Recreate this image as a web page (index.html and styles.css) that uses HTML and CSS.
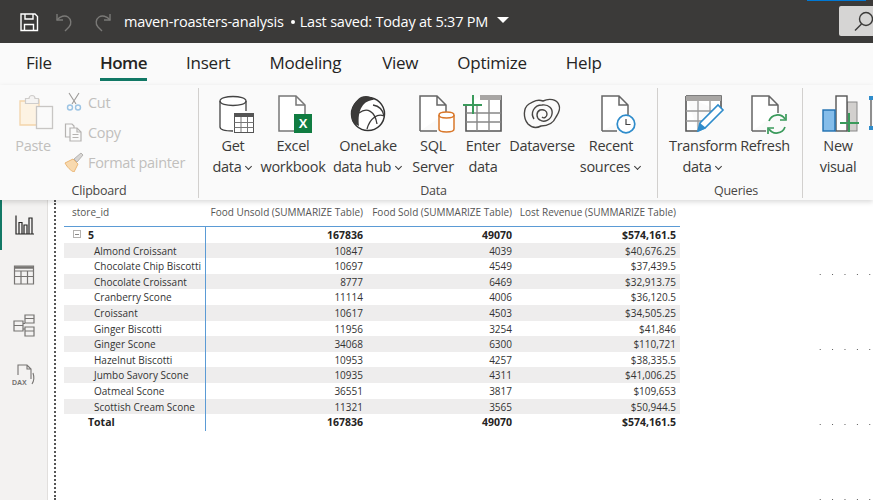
FILE: index.html
```html
<!DOCTYPE html>
<html lang="en">

<head>
    <meta charset="UTF-8">
    <meta name="viewport" content="width=device-width, initial-scale=1.0">
    <title>maven-roasters-analysis</title>
    <link rel="stylesheet" href="styles.css">
</head>

<body>

    <header class="titlebar">
        <svg class="qa" width="22" height="22" viewBox="0 0 22 22" fill="none" stroke="#fff" stroke-width="1.4">
            <path d="M3 3h14l2.500 2.500V19.500H3z" /><path d="M7 3v5h8V3" /><path d="M6.500 19.500v-6h9v6" />
        </svg>
        <svg class="qa undo" width="20" height="22" viewBox="0 0 20 22" fill="none" stroke="#7a7977" stroke-width="1.4">
            <path d="M2 3v6h6" /><path d="M2 9c3-4 8-5 11-3s4 7 1 10l-4 4" />
        </svg>
        <svg class="qa redo" width="20" height="22" viewBox="0 0 20 22" fill="none" stroke="#7a7977" stroke-width="1.4">
            <path d="M18 3v6h-6" /><path d="M18 9c-3-4-8-5-11-3s-4 7-1 10l4 4" />
        </svg>
        <span class="filename">maven-roasters-analysis</span>
        <span class="dot"></span>
        <span class="saved">Last saved: Today at 5:37 PM</span>
        <span class="caret"></span>
        <div class="search">
            <svg width="20" height="22" viewBox="0 0 20 22" fill="none" stroke="#3b3a39" stroke-width="1.4">
                <circle cx="12" cy="9" r="6.500" /><path d="M7.500 14L1 20.500" />
            </svg>
        </div>
        <span class="account-line"></span>
    </header>

    <nav class="tabs">
        <a class="tab tab-file">File</a>
        <a class="tab tab-home active">Home</a>
        <a class="tab tab-insert">Insert</a>
        <a class="tab tab-modeling">Modeling</a>
        <a class="tab tab-view">View</a>
        <a class="tab tab-optimize">Optimize</a>
        <a class="tab tab-help">Help</a>
    </nav>

    <section class="ribbon">
        <div class="group group-clipboard">
            <div class="group-body">
                <div class="btn btn-paste disabled">
                    <svg width="44" height="40" viewBox="0 0 44 40" fill="none">
                        <path d="M20 8h4.500v-1h0.500V32H6V8h6" fill="#fdf3e3" stroke="#f3d5ab" stroke-width="1.300" />
                        <path d="M11.500 5.500h3.500a3 3 0 0 1 6 0h3.500v5h-13z" fill="#f5f4f3" stroke="#cfcdcb" stroke-width="1.200" />
                        <rect x="22.500" y="17.500" width="16" height="22" fill="#fafafa" stroke="#c8c6c4" stroke-width="1.300" transform="translate(0 -4)" />
                    </svg>
                    <span>Paste</span>
                </div>
                <div class="small-col disabled">
                    <div class="small-btn">
                        <svg width="20" height="20" viewBox="0 0 20 20" fill="none" stroke="#9c9a98" stroke-width="1.100">
                            <path d="M5 1l7 11M15 1L8 12" /><circle cx="6" cy="15.500" r="2.500" stroke="#9cc4e4" stroke-width="1.400" /><circle cx="14" cy="15.500" r="2.500" stroke="#9cc4e4" stroke-width="1.400" />
                        </svg>
                        <span>Cut</span>
                    </div>
                    <div class="small-btn">
                        <svg width="20" height="20" viewBox="0 0 20 20" fill="none" stroke="#b5b3b1" stroke-width="1.200">
                            <path d="M6 15H1.500V2H8l2 2v2" /><path d="M6 6h7l4 4v9H6z" /><path d="M13 6v4h4M8.500 12.500h6M8.500 15.500h6" />
                        </svg>
                        <span>Copy</span>
                    </div>
                    <div class="small-btn">
                        <svg width="20" height="20" viewBox="0 0 20 20" fill="none">
                            <path d="M1 11l8-4 5 5-4 8c-3-1-7-5-9-9z" fill="#f8d9ae" stroke="#eab676" />
                            <path d="M10 7l7-6 2 2-6 7z" fill="#d8d6d4" stroke="#b5b3b1" />
                        </svg>
                        <span>Format painter</span>
                    </div>
                </div>
            </div>
            <div class="group-label">Clipboard</div>
        </div>

        <div class="group group-data">
            <div class="group-body">
                <div class="btn">
                    <svg width="44" height="40" viewBox="0 0 44 40" fill="none">
                        <path d="M35 17V7c0-6-26-6-26 0v26c0 3 7 4 13 4" fill="#fff" stroke="#444" stroke-width="1.300" />
                        <path d="M9 7c0 6 26 6 26 0" stroke="#444" stroke-width="1.300" />
                        <rect x="23.500" y="19.500" width="19" height="19" fill="#fff" stroke="#555" />
                        <rect x="23" y="19" width="20" height="4" fill="#555" />
                        <path d="M23.500 28.500h19M23.500 33.500h19M30 23v15M36.500 23v15" stroke="#777" />
                    </svg>
                    <span>Get</span>
                    <span>data<i class="chev"></i></span>
                </div>
                <div class="btn">
                    <svg width="44" height="40" viewBox="0 0 44 40" fill="none">
                        <path d="M8 2h17l9 9v26H8z" fill="#fff" stroke="#777" stroke-width="1.500" />
                        <path d="M25 2v9h9" stroke="#777" stroke-width="1.500" />
                        <rect x="23" y="20" width="18" height="19" fill="#107c41" />
                        <text x="32" y="34" class="xl">X</text>
                    </svg>
                    <span>Excel</span>
                    <span>workbook</span>
                </div>
                <div class="btn">
                    <svg width="44" height="40" viewBox="0 0 44 40" fill="none">
                        <circle cx="22" cy="20" r="16.500" fill="#fff" stroke="#333" stroke-width="1.500" />
                        <path d="M6 26C3 14 10 6 15 3c5-2 10-1 13 3-10 0-17 9-15 26-3-1-6-3-7-6z" fill="#3b3a39" />
                        <path d="M13 19c8-6 16-2 18 11M27 11c6 1 10 5 11 11-6-3-14 2-17 13" stroke="#3b3a39" stroke-width="1.300" />
                    </svg>
                    <span>OneLake</span>
                    <span>data hub<i class="chev"></i></span>
                </div>
                <div class="btn">
                    <svg width="44" height="40" viewBox="0 0 44 40" fill="none">
                        <path d="M9 37V2h17l9 9v8M26 2v9h9M9 37h17" fill="#fff" stroke="#666" stroke-width="1.500" />
                        <path d="M43 21v14c0 4-15 4-15 0V21" fill="#fff" stroke="#d9782b" stroke-width="1.500" />
                        <path d="M28 21c0-4 15-4 15 0s-15 4-15 0z" fill="#fff" stroke="#d9782b" stroke-width="1.500" />
                    </svg>
                    <span>SQL</span>
                    <span>Server</span>
                </div>
                <div class="btn">
                    <svg width="44" height="40" viewBox="0 0 44 40" fill="none">
                        <path d="M5 10v27h35V2H20" fill="#fff" stroke="#555" stroke-width="1.600" />
                        <rect x="19" y="1" width="21" height="5" fill="#a8a6a4" />
                        <path d="M5 19h35M5 28h35M16 12v25M28 6v31" stroke="#888" stroke-width="1.400" />
                        <path d="M12 1v19M2 11h19" stroke="#3a9a5b" stroke-width="2" />
                    </svg>
                    <span>Enter</span>
                    <span>data</span>
                </div>
                <div class="btn">
                    <svg width="44" height="40" viewBox="0 0 44 40" fill="none" stroke="#484644" stroke-width="1.400">
                        <path d="M8 30C3 24 3 14 9 10c5-3 9-5 14-3 6-3 14-2 16 4 2 5-1 9-3 12-3 7-10 9-15 9-4 2-9 2-13-2z" />
                        <path d="M14 25c-4-6 0-14 8-14 7-1 11 4 10 9-1 6-8 9-12 6-4-2-4-8 0-10 4-1 7 1 7 4s-3 5-5 3" />
                    </svg>
                    <span>Dataverse</span>
                </div>
                <div class="btn btn-recent">
                    <svg width="44" height="40" viewBox="0 0 44 40" fill="none">
                        <path d="M9 37V2h17l9 9v12M26 2v9h9M9 37h15" fill="#fff" stroke="#666" stroke-width="1.500" />
                        <circle cx="33" cy="30" r="8.800" fill="#fff" stroke="#2f8ccb" stroke-width="1.700" />
                        <path d="M33 25v5.500h4.500" stroke="#444" stroke-width="1.200" />
                    </svg>
                    <span>Recent</span>
                    <span>sources<i class="chev"></i></span>
                </div>
            </div>
            <div class="group-label">Data</div>
        </div>

        <div class="group group-queries">
            <div class="group-body">
                <div class="btn btn-transform">
                    <svg width="44" height="40" viewBox="0 0 44 40" fill="none">
                        <path d="M5 2h35v16M5 2v35h12" fill="#fff" stroke="#555" stroke-width="1.600" />
                        <rect x="5" y="2" width="35" height="5" fill="#a8a6a4" />
                        <path d="M5 17h30M5 27h18M17 7v30M29 7v14" stroke="#999" stroke-width="1.300" />
                        <path d="M17 37l2-8 18-18 5 5-18 18z" fill="#fff" stroke="#2f8ccb" stroke-width="1.600" />
                        <path d="M17 38l2-9 6 5z" fill="#2f8ccb" />
                    </svg>
                    <span>Transform</span>
                    <span>data<i class="chev"></i></span>
                </div>
                <div class="btn">
                    <svg width="44" height="40" viewBox="0 0 44 40" fill="none">
                        <path d="M9 37V2h17l9 9v8M26 2v9h9M9 37h14" fill="#fff" stroke="#666" stroke-width="1.500" />
                        <path d="M26 27a9 9 0 0 1 16-2M42 33a9 9 0 0 1-16 2" stroke="#3a9a5b" stroke-width="1.700" />
                        <path d="M43 20v6h-6M25 40v-6h6" stroke="#3a9a5b" stroke-width="1.700" />
                    </svg>
                    <span>Refresh</span>
                </div>
            </div>
            <div class="group-label">Queries</div>
        </div>

        <div class="group group-insert">
            <div class="group-body">
                <div class="btn">
                    <svg width="44" height="40" viewBox="0 0 44 40" fill="none">
                        <rect x="31" y="8" width="10" height="29" fill="#d2d0ce" stroke="#888" />
                        <rect x="20" y="2" width="11" height="35" fill="#fff" stroke="#555" stroke-width="1.400" />
                        <rect x="7" y="16" width="12" height="21" fill="#85bdea" stroke="#1f6fb0" stroke-width="1.400" />
                        <path d="M33 19v19M24 29h19" stroke="#3a9a5b" stroke-width="2" />
                    </svg>
                    <span>New</span>
                    <span>visual</span>
                </div>
            </div>
        </div>
        <svg class="clipped" width="10" height="40" viewBox="0 0 10 40" fill="none">
            <path d="M2 4v30" stroke="#555" stroke-width="1.300" /><rect x="0" y="2" width="4" height="4" fill="#2f8ccb" /><rect x="0" y="32" width="4" height="4" fill="#2f8ccb" />
        </svg>
    </section>

    <main class="workspace">
        <aside class="rail">
            <div class="rail-item active">
                <svg width="22" height="22" viewBox="0 0 22 22" fill="none" stroke="#252423" stroke-width="1.200">
                    <path d="M2 1.500v18.500h18M5 20V8.500h3V20M10 20V11h3v9M15 20V4h3v16" />
                </svg>
            </div>
            <div class="rail-item">
                <svg width="22" height="22" viewBox="0 0 22 22" fill="none" stroke="#767472" stroke-width="1.200">
                    <path d="M1.500 2h19v18h-19zM1.500 7h19M1.500 12.500h19M8 7v13M14.500 7v13" /><path d="M1.500 3.500h19" stroke-width="2.500" />
                </svg>
            </div>
            <div class="rail-item">
                <svg width="24" height="24" viewBox="0 0 24 24" fill="none" stroke="#767472" stroke-width="1.200">
                    <path d="M2 8h9v10H2zM2 12.500h9M13 2h9v8h-9zM13 5.500h9M13 14h9v9h-9zM13 18h9M11 10.500h2M11 16h2" />
                </svg>
            </div>
            <div class="rail-item">
                <svg width="24" height="24" viewBox="0 0 24 24" fill="none" stroke="#767472" stroke-width="1.100">
                    <path d="M6 12V2h9l4 4v10M15 2v4h4M21 10c1 3 1 8-1 11" />
                    <text x="0" y="22" class="dax">DAX</text>
                </svg>
            </div>
        </aside>

        <div class="canvas">
            <div class="matrix">
                <div class="row head">
                    <div class="cell first">store_id</div>
                    <div class="cell">Food Unsold (SUMMARIZE Table)</div>
                    <div class="cell">Food Sold (SUMMARIZE Table)</div>
                    <div class="cell">Lost Revenue (SUMMARIZE Table)</div>
                </div>
                <div class="row bold">
                    <div class="cell first store"><i class="minus"></i>5</div>
                    <div class="cell">167836</div><div class="cell">49070</div><div class="cell">$574,161.5</div>
                </div>
                <div class="row band">
                    <div class="cell first item">Almond Croissant</div>
                    <div class="cell">10847</div><div class="cell">4039</div><div class="cell">$40,676.25</div>
                </div>
                <div class="row">
                    <div class="cell first item">Chocolate Chip Biscotti</div>
                    <div class="cell">10697</div><div class="cell">4549</div><div class="cell">$37,439.5</div>
                </div>
                <div class="row band">
                    <div class="cell first item">Chocolate Croissant</div>
                    <div class="cell">8777</div><div class="cell">6469</div><div class="cell">$32,913.75</div>
                </div>
                <div class="row">
                    <div class="cell first item">Cranberry Scone</div>
                    <div class="cell">11114</div><div class="cell">4006</div><div class="cell">$36,120.5</div>
                </div>
                <div class="row band">
                    <div class="cell first item">Croissant</div>
                    <div class="cell">10617</div><div class="cell">4503</div><div class="cell">$34,505.25</div>
                </div>
                <div class="row">
                    <div class="cell first item">Ginger Biscotti</div>
                    <div class="cell">11956</div><div class="cell">3254</div><div class="cell">$41,846</div>
                </div>
                <div class="row band">
                    <div class="cell first item">Ginger Scone</div>
                    <div class="cell">34068</div><div class="cell">6300</div><div class="cell">$110,721</div>
                </div>
                <div class="row">
                    <div class="cell first item">Hazelnut Biscotti</div>
                    <div class="cell">10953</div><div class="cell">4257</div><div class="cell">$38,335.5</div>
                </div>
                <div class="row band">
                    <div class="cell first item">Jumbo Savory Scone</div>
                    <div class="cell">10935</div><div class="cell">4311</div><div class="cell">$41,006.25</div>
                </div>
                <div class="row">
                    <div class="cell first item">Oatmeal Scone</div>
                    <div class="cell">36551</div><div class="cell">3817</div><div class="cell">$109,653</div>
                </div>
                <div class="row band">
                    <div class="cell first item">Scottish Cream Scone</div>
                    <div class="cell">11321</div><div class="cell">3565</div><div class="cell">$50,944.5</div>
                </div>
                <div class="row bold">
                    <div class="cell first store">Total</div>
                    <div class="cell">167836</div><div class="cell">49070</div><div class="cell">$574,161.5</div>
                </div>
            </div>
            <div class="grid-dots"></div>
        </div>
    </main>

</body>

</html>
```

FILE: styles.css
```css
* {
    box-sizing: border-box;
}

body {
    margin: 0;
    height: 500px;
    overflow: hidden;
    font-family: "Open Sans", "Noto Sans", sans-serif;
    background-color: #fff;
    color: #252423;
}

/* title bar */
.titlebar {
    display: flex;
    align-items: center;
    position: relative;
    height: 43px;
    padding-left: 18px;
    background-color: #3b3a39;
    color: #fff;
    font-size: 14.5px;
    letter-spacing: -0.2px;
}

.undo {
    margin-left: 15px;
}

.redo {
    margin-left: 17px;
}

.filename {
    margin-left: 12px;
}

.dot {
    width: 4px;
    height: 4px;
    margin: 0 5px 0 7px;
    border-radius: 50%;
    background-color: #fff;
}

.caret {
    width: 0;
    height: 0;
    margin-left: 9px;
    margin-bottom: 4px;
    border-left: 6px solid transparent;
    border-right: 6px solid transparent;
    border-top: 6px solid #fff;
}

.search {
    position: absolute;
    left: 839px;
    top: 6px;
    width: 40px;
    height: 30px;
    padding: 4px 0 0 15px;
    border-radius: 2px;
    background-color: #d6d5d4;
}

.account-line {
    position: absolute;
    left: 807px;
    top: 0;
    width: 59px;
    height: 1px;
    background-color: #0078d4;
}

/* tabs */
.tabs {
    display: flex;
    height: 42px;
    padding-left: 26px;
    background-color: #fafafa;
    font-size: 17px;
    letter-spacing: -0.25px;
}

.tab {
    height: 38px;
    padding-top: 8px;
    color: #252423;
}

.tab-home {
    margin-left: 48px;
    font-weight: 600;
    border-bottom: 3px solid #117865;
    height: 38px;
    letter-spacing: -0.5px;
}

.tab-insert {
    margin-left: 39px;
}

.tab-modeling {
    margin-left: 39px;
}

.tab-view {
    margin-left: 41px;
}

.tab-optimize {
    margin-left: 39px;
}

.tab-help {
    margin-left: 39px;
}

/* ribbon */
.ribbon {
    display: flex;
    position: relative;
    z-index: 2;
    height: 115px;
    background-color: #fafafa;
    box-shadow: 0 2px 5px rgba(0, 0, 0, 0.15);
    font-size: 14.5px;
    letter-spacing: -0.3px;
    color: #3b3a39;
}

.group {
    display: flex;
    flex-direction: column;
    flex-shrink: 0;
    height: 110px;
    margin-top: 3px;
    border-right: 1px solid #d2d0ce;
}

.group-body {
    display: flex;
    flex-shrink: 0;
    height: 96px;
}

.group-label {
    line-height: 14px;
    text-align: center;
    font-size: 12.5px;
    letter-spacing: -0.2px;
    color: #484644;
}

.group-clipboard {
    width: 199px;
}

.group-data {
    width: 459px;
    padding-left: 11px;
}

.group-queries {
    width: 145px;
    padding-left: 12px;
}

.group-insert {
    width: 66px;
    border-right: 0;
    padding-left: 12px;
}

.btn {
    display: flex;
    flex-direction: column;
    align-items: center;
    width: 46px;
    line-height: 21px;
    white-space: nowrap;
}

.btn svg {
    flex-shrink: 0;
    height: 40px;
    margin-top: 6px;
    margin-bottom: 1px;
}

.group-data .btn:nth-child(2) {
    width: 74px;
}

.group-data .btn:nth-child(3) {
    width: 76px;
}

.group-data .btn:nth-child(4) {
    width: 54px;
}

.group-data .btn:nth-child(6) {
    width: 72px;
}

.group-data .btn:nth-child(7) {
    width: 66px;
}

.btn-recent svg {
    margin-left: 8px;
}

.btn-transform {
    width: 66px;
}

.group-queries .btn:nth-child(2) {
    width: 58px;
}

.btn-paste {
    width: 44px;
    margin-left: 11px;
}

.btn-paste svg {
    margin-left: 6px;
    margin-top: 5px;
    margin-bottom: 2px;
}

.chev {
    display: inline-block;
    width: 5px;
    height: 5px;
    margin: 0 2px 3px 5px;
    border-right: 1.5px solid #3b3a39;
    border-bottom: 1.5px solid #3b3a39;
    transform: rotate(45deg);
}

.disabled,
.disabled span {
    color: #c1bfbd;
}

.small-col {
    display: flex;
    flex-direction: column;
    margin: -1px 0 0 9px;
}

.small-btn {
    display: flex;
    align-items: center;
    gap: 4px;
    height: 30px;
    white-space: nowrap;
}

.xl {
    fill: #fff;
    font: 700 13px "Liberation Sans", sans-serif;
    text-anchor: middle;
}

.clipped {
    margin-top: 9px;
    flex-shrink: 0;
}

/* left rail + page */
.workspace {
    display: flex;
    height: 300px;
}

.rail {
    width: 48px;
    background-color: #f3f2f1;
    border-right: 1px solid #e1dfdd;
}

.rail-item {
    display: flex;
    align-items: center;
    justify-content: center;
    height: 50px;
}

.rail-item.active {
    border-left: 2px solid #117865;
}

.dax {
    fill: #767472;
    font: 700 7px "Liberation Sans", sans-serif;
    stroke: none;
}

.canvas {
    position: relative;
    flex: 1;
    margin-left: 6px;
    padding-left: 8px;
    border-left: 2px dotted #555;
}

.matrix {
    width: 616px;
    font-size: 10px;
    color: #333;
}

.row {
    display: grid;
    grid-template-columns: 142px 161px 149px 164px;
    height: 15.6px;
    line-height: 17px;
}

.head {
    height: 27px;
    line-height: 25px;
    border-bottom: 1px solid #5b9bd5;
    font-size: 10px;
    color: #555;
}

.band {
    background-color: #eeeded;
}

.bold {
    font-weight: 700;
    color: #252423;
    font-size: 10.5px;
}

.cell {
    padding-right: 4px;
    text-align: right;
    white-space: nowrap;
}

.first {
    padding-left: 8px;
    text-align: left;
    border-right: 1px solid #5b9bd5;
}

.head .first {
    border-right: 0;
}

.store {
    padding-left: 24px;
    position: relative;
}

.item {
    padding-left: 30px;
}

.minus {
    position: absolute;
    left: 9px;
    top: 3px;
    width: 8px;
    height: 8px;
    border: 1px solid #b3b1af;
    background: linear-gradient(#8a8886, #8a8886) center / 4px 1px no-repeat;
}

.grid-dots {
    position: absolute;
    left: 763px;
    top: 74px;
    width: 60px;
    height: 226px;
    background-image: radial-gradient(circle, #555 0.7px, transparent 0.8px);
    background-size: 12.4px 75px;
    background-position: -5px -37px;
}
```
